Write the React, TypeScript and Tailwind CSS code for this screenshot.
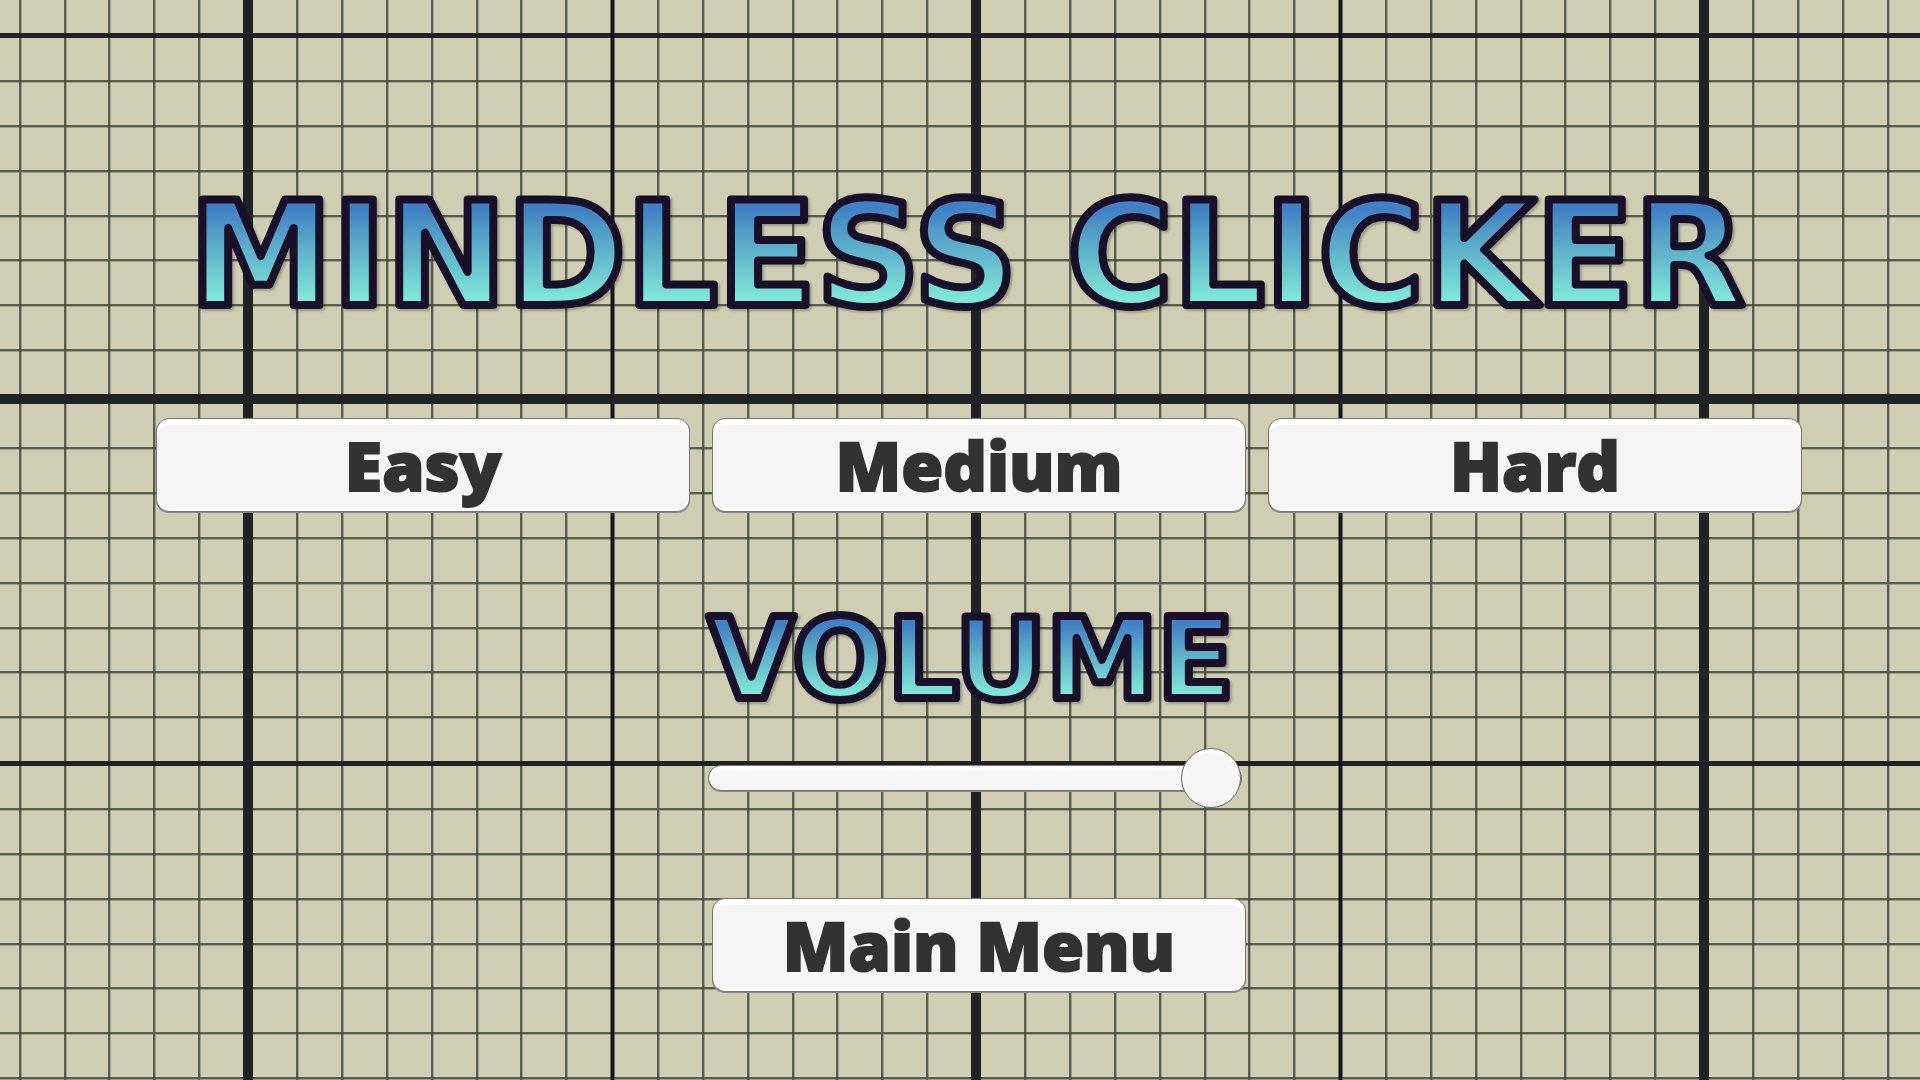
import { useState } from "react";

const THIN_LINES = [49, 94, 139, 184, 229, 273, 318, 410, 455, 500, 545, 589, 634, 679];

const GridBackground = () => {
  return (
    <svg className="absolute inset-0 -z-10 h-full w-full" aria-hidden="true">
      <defs>
        {/* one tile = one heavy line + one medium line + the thin ones */}
        <pattern id="grid" x="248" y="399" width="728" height="728" patternUnits="userSpaceOnUse">
          <rect width="728" height="728" fill="#cfceb3" />
          {THIN_LINES.map((p) => (
            <g key={p} stroke="#414840">
              <path d={`M${p + 0.5} 0V728M0 ${p + 0.5}H728`} strokeWidth="3" opacity="0.35" />
              <path d={`M${p} 0V728M0 ${p}H728`} strokeWidth="2" opacity="0.75" />
            </g>
          ))}
          <path d="M0 364.5H728" stroke="#1f2226" strokeWidth="5" />
          <path d="M364.5 0V728" stroke="#14171a" strokeWidth="4" />
          <path d="M0 0V728M728 0V728M0 0H728M0 728H728" stroke="#1f2326" strokeWidth="10" />
        </pattern>
      </defs>
      <rect width="100%" height="100%" fill="url(#grid)" />
    </svg>
  );
};

type LogoTextProps = {
  id: string;
  text: string;
  size: number;
  baseline: number;
  className: string;
};

const LogoText = ({ id, text, size, baseline, className }: LogoTextProps) => {
  return (
    <svg className={`block w-full overflow-visible drop-shadow-[2px_2px_1px_rgba(0,0,0,0.25)] ${className}`}>
      <defs>
        <linearGradient id={id} gradientUnits="userSpaceOnUse" x1="0" x2="0" y1={baseline - size * 0.7} y2={baseline}>
          <stop offset="0.05" stopColor="#4180c4" />
          <stop offset="0.4" stopColor="#5aabc8" />
          <stop offset="0.95" stopColor="#80e8d9" />
        </linearGradient>
      </defs>
      <text
        x="50%"
        y={baseline}
        textAnchor="middle"
        fontSize={size}
        fill={`url(#${id})`}
        stroke="#181029"
        strokeWidth="8"
        strokeLinejoin="round"
        className="font-['DejaVu_Sans',sans-serif] font-bold"
      >
        {text}
      </text>
    </svg>
  );
};

const MenuButton = ({ label, className = "" }: { label: string; className?: string }) => {
  return (
    <button
      type="button"
      className={`flex h-[94px] items-center justify-center rounded-[13px] border border-[#77776f] bg-[#f5f5f5] font-['Open_Sans',sans-serif] text-[68px] leading-none font-extrabold text-[#323232] shadow-[inset_0_6px_1px_#fff,inset_0_-2px_1px_#fff,0_1px_0_#8a8a82] [-webkit-text-stroke:2px_#323232] ${className}`}
    >
      {label}
    </button>
  );
};

const App = () => {
  const [volume, setVolume] = useState(100);

  return (
    <main className="relative isolate min-h-screen overflow-hidden pt-[170px] pr-[118px] pb-[88px] pl-[156px]">
      <GridBackground />
      <h1 className="pr-6">
        <LogoText id="title-fill" text="MINDLESS CLICKER" size={144} baseline={135} className="h-[160px]" />
      </h1>

      <div className="mt-[88px] grid grid-cols-3 gap-[22px]">
        <MenuButton label="Easy" />
        <MenuButton label="Medium" />
        <MenuButton label="Hard" />
      </div>

      <section className="mt-20 flex flex-col items-center pr-2">
        <label htmlFor="volume" className="block w-full pr-2">
          <LogoText id="volume-fill" text="VOLUME" size={112} baseline={106} className="h-[128px]" />
        </label>
        <input
          id="volume"
          type="range"
          min={0}
          max={100}
          value={volume}
          onChange={(e) => setVolume(Number(e.target.value))}
          className="mt-7 h-[60px] w-[534px] cursor-pointer appearance-none bg-transparent [&::-webkit-slider-runnable-track]:h-[26px] [&::-webkit-slider-runnable-track]:rounded-full [&::-webkit-slider-runnable-track]:border [&::-webkit-slider-runnable-track]:border-[#77776f] [&::-webkit-slider-runnable-track]:bg-[#f5f5f5] [&::-webkit-slider-runnable-track]:shadow-[inset_0_5px_1px_#fff,0_1px_0_#8a8a82] [&::-webkit-slider-thumb]:-mt-[18px] [&::-webkit-slider-thumb]:size-[60px] [&::-webkit-slider-thumb]:appearance-none [&::-webkit-slider-thumb]:rounded-full [&::-webkit-slider-thumb]:border [&::-webkit-slider-thumb]:border-[#66665f] [&::-webkit-slider-thumb]:bg-[#f5f5f5] [&::-webkit-slider-thumb]:shadow-[inset_0_4px_3px_#fff]"
        />
      </section>

      <div className="mt-[90px] grid grid-cols-3 gap-[22px]">
        <MenuButton label="Main Menu" className="col-start-2" />
      </div>
    </main>
  );
};

export default App;
